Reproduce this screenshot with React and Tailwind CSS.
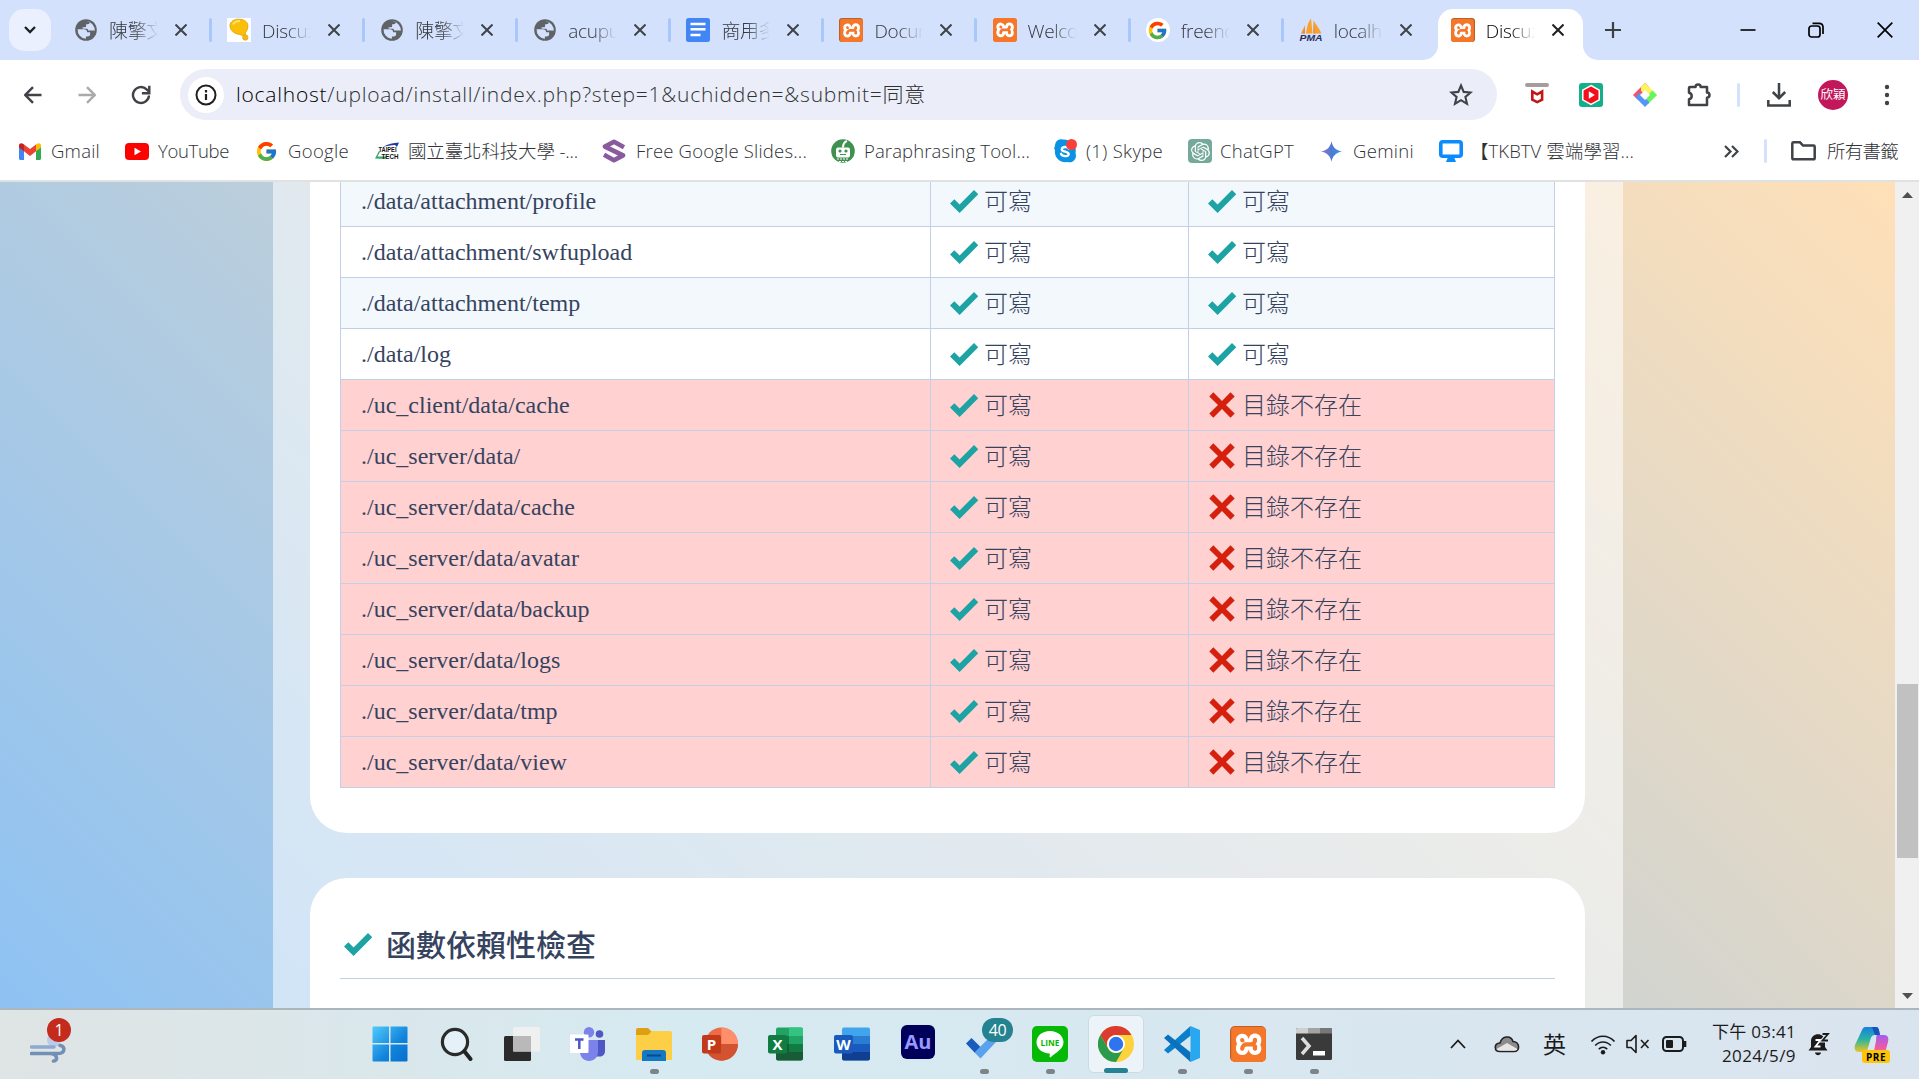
import React, { useLayoutEffect, useRef } from "react";
import { FcGoogle } from "react-icons/fc";
import { SiXampp, SiOpenai } from "react-icons/si";

const UI = "font-['Open_Sans','Noto_Sans_CJK_TC',sans-serif]";

/* Text set to a fixed measure by adjusting its tracking. */
function Fit({ w, children, className = "" }) {
  const ref = useRef(null);
  useLayoutEffect(() => {
    const el = ref.current;
    el.style.letterSpacing = "0px";
    const n = Array.from(el.textContent).length;
    el.style.letterSpacing = (w - el.getBoundingClientRect().width) / n + "px";
  }, [w]);
  return (
    <span ref={ref} className={"inline-block shrink-0 whitespace-pre " + className}>
      {children}
    </span>
  );
}

/* ---------- favicons ---------- */
const Globe = () => (
  <svg viewBox="0 0 24 24" className="size-6">
    <circle cx="12" cy="12" r="10.8" fill="#5f6368" />
    <path d="M3.6 11.2h6.2c2.2 0 3.3 1.2 3.3 3h3v2.4c0 1.2-1 1.9-2.6 1.9h-1.6v2.3A9 9 0 0 1 3.6 11.2z" fill="#d3e1fc" />
    <path d="M12.6 3.3c1.3.1 2.3.3 3.2.8-.1 1.6-.9 2.1-2.2 2.1h-1.500v1.700c0 .9-.5 1.300-1.400 1.300h-1c-1 0-1.300 0-1.300.6 0 .5.5.9 1.300.9h2.600c1.300 0 1.800.6 1.800 1.900h4.500c.5 0 1.200-.1 2.100.3a9 9 0 0 0-8.100-9.600z" fill="#d3e1fc" />
  </svg>
);
const Bulb = () => (
  <svg viewBox="0 0 24 24" className="size-6">
    <rect width="24" height="24" fill="#fff" />
    <path d="M3 7.500C3 4 7 1.200 11.500 1.200c4.700 0 8.500 2 9.200 5.300.7 4-1.200 6.500-2.200 7.800l-.5 3c-2 .3-3 .2-5.200-.9C7 16 3 12 3 7.500z" fill="#fbbf0a" stroke="#e5a80d" />
    <path d="M6 6.500C7.500 3.500 10 3 13 3" stroke="#ffe46b" strokeWidth="2" fill="none" />
    <circle cx="18.300" cy="19.500" r="2.700" fill="#f5b80d" stroke="#e0a010" strokeWidth=".7" />
  </svg>
);
const Docs = () => (
  <svg viewBox="0 0 24 24" className="size-6">
    <rect width="24" height="24" rx="2.500" fill="#4285f4" />
    <path d="M4.500 6h15M4.500 11.300h15M4.500 17h10" stroke="#fff" strokeWidth="2.400" />
  </svg>
);
const Xampp = ({ big, glossy = true }) => (
  <span
    className={
      (big ? "size-9 rounded-[5px] " : "size-6 rounded-[3px] ") +
      (glossy ? "bg-[#b9602a] " : "bg-[#fb7a24] ") +
      "flex shrink-0 items-center justify-center overflow-hidden"
    }
  >
    <span className={"flex shrink-0 items-center justify-center bg-white " + (big ? "size-7" : "size-[19px]")}>
      <SiXampp className={"shrink-0 text-[#f5772a] " + (big ? "size-[35px]" : glossy ? "size-[23px]" : "size-6")} />
    </span>
  </span>
);
const GoogleTab = () => (
  <span className="flex size-6 items-center justify-center rounded-full bg-white">
    <FcGoogle className="size-[21px]" />
  </span>
);
const Pma = () => (
  <svg viewBox="0 0 24 24" className="size-6">
    <path d="M2 15.500 6 7v8.500zM7 15.500C8 10 8.500 5 12 .5l1.500 15zM14.500 15.500V2.500C17 6 20.500 11 22.500 15.500z" fill="#f8a12c" />
    <path d="M3 15.500 6 9v6.500zM14.500 5l2 10.500h-2z" fill="#e98a3a" />
    <text x="12" y="23.300" textAnchor="middle" textLength="23" lengthAdjust="spacingAndGlyphs" fontFamily="Liberation Sans" fontStyle="italic" fontWeight="bold" fontSize="9" fill="#2b2f63">PMA</text>
  </svg>
);

const X = ({ dark }) => (
  <svg viewBox="0 0 12 12" className={"size-3 " + (dark ? "text-[#1f1f1f]" : "text-[#3f4246]")}>
    <path d="M.5.5l11 11M11.500.5l-11 11" stroke="currentColor" strokeWidth="2" />
  </svg>
);

const TABS = [
  [Globe, "陳擎文"],
  [Bulb, "Discuz"],
  [Globe, "陳擎文"],
  [Globe, "acupun"],
  [Docs, "商用多"],
  [Xampp, "Docum"],
  [() => <Xampp glossy={false} />, "Welco"],
  [GoogleTab, "freeno"],
  [Pma, "localho"],
];

function TabBody({ Icon, label, active }) {
  return (
    <>
      <Icon />
      <span
        className={
          UI +
          " ml-[11px] w-[49px] overflow-hidden whitespace-nowrap pt-[2px] text-[19px] leading-7 font-light tracking-[-0.3px] mask-r-from-50% mask-r-to-100% " +
          (active ? "text-black" : "text-[#34373b]")
        }
      >
        {label}
      </span>
      <span className="ml-[17px]">
        <X dark={active} />
      </span>
    </>
  );
}

function TabStrip() {
  return (
    <div className="flex h-[60px] items-center bg-[#d3e1fc]">
      <div className="ml-[9px] flex size-[42px] items-center justify-center rounded-[15px] bg-[#eaf0fe]">
        <svg viewBox="0 0 12 8" className="h-2 w-3"><path d="M1 1l5 5 5-5" fill="none" stroke="#1f1f1f" strokeWidth="2.300" /></svg>
      </div>
      <div className="ml-[22px] flex">
        {TABS.map(([Icon, label], i) => (
          <div key={i} className="flex h-6 w-[153.100px] items-center pl-px">
            <TabBody Icon={Icon} label={label} />
            <span className={"ml-[22px] h-6 w-[3px] rounded-sm " + (i === 8 ? "" : "bg-[#a8c7fa]")} />
          </div>
        ))}
      </div>
      <div className="relative -ml-[13px] flex h-[51px] w-[145px] items-center self-end rounded-t-[15px] bg-white pb-[9px] pl-[13px]">
        <TabBody Icon={Xampp} label="Discuz" active />
        <svg viewBox="0 0 15 15" className="absolute bottom-0 -left-[15px] size-[15px]"><path d="M15 0v15H0A15 15 0 0 0 15 0z" fill="#fff" /></svg>
        <svg viewBox="0 0 15 15" className="absolute -right-[15px] bottom-0 size-[15px]"><path d="M0 0v15h15A15 15 0 0 1 0 0z" fill="#fff" /></svg>
      </div>
      <svg viewBox="0 0 16 16" className="ml-[22px] size-4"><path d="M8 0v16M0 8h16" stroke="#3c4043" strokeWidth="2.200" /></svg>
      <div className="mr-[26px] ml-auto flex items-center">
        <svg viewBox="0 0 16 16" className="size-4"><path d="M.5 8h15" stroke="#000" strokeWidth="1.600" /></svg>
        <svg viewBox="0 0 16 16" className="ml-[52px] size-4">
          <rect x="1" y="4" width="11" height="11" rx="2.500" fill="none" stroke="#000" strokeWidth="1.700" />
          <path d="M4.500 1.300H11c2.500 0 4 1.500 4 4V12" fill="none" stroke="#000" strokeWidth="1.700" />
        </svg>
        <svg viewBox="0 0 16 16" className="ml-[53px] size-4"><path d="M.7.7l14.600 14.600M15.300.7.7 15.300" stroke="#000" strokeWidth="1.700" /></svg>
      </div>
    </div>
  );
}

function Toolbar() {
  return (
    <div className="flex h-[60px] items-center pt-[9px]">
      <svg viewBox="0 0 18 18" className="ml-6 size-[18px]"><path d="M17.500 9H1.500M9 1.200 1.300 9 9 16.800" fill="none" stroke="#3f4246" strokeWidth="2.400" /></svg>
      <svg viewBox="0 0 18 18" className="ml-9 size-[18px]"><path d="M.5 9h16M9 1.200 16.700 9 9 16.800" fill="none" stroke="#a9aaac" strokeWidth="2.400" /></svg>
      <svg viewBox="0 0 20 20" className="ml-[35px] size-5">
        <path d="M18 10.500a8 8 0 1 1-2.400-6.200l2.200 2.200" fill="none" stroke="#3f4246" strokeWidth="2.400" />
        <path d="M18.300.8v7.400h-7.400" fill="none" stroke="#3f4246" strokeWidth="2.400" />
      </svg>
      <div className="ml-[29px] flex h-[51px] w-[1317px] items-center rounded-full bg-[#ebeef8] pl-2">
        <div className="flex size-9 items-center justify-center rounded-full bg-white">
          <svg viewBox="0 0 22 22" className="size-[22px]">
            <circle cx="11" cy="11" r="9.500" fill="none" stroke="#1f1f1f" strokeWidth="2" />
            <path d="M11 10v6M11 6v2.400" stroke="#1f1f1f" strokeWidth="2.200" />
          </svg>
        </div>
        <Fit w={690} className={UI + " mb-[2px] ml-[12px] text-[21px] leading-7 font-light text-[#303236]"}>
          <span className="text-black">localhost</span>/upload/install/index.php?step=1&amp;uchidden=&amp;submit=同意
        </Fit>
        <svg viewBox="0 0 24 24" className="mr-6 ml-auto size-6">
          <path d="M12 2.500l2.700 6.400 6.900.6-5.200 4.500 1.600 6.800-6-3.600-6 3.600 1.600-6.800-5.200-4.500 6.900-.6z" fill="none" stroke="#3f4246" strokeWidth="2.100" />
        </svg>
      </div>
      <svg viewBox="0 0 24 24" className="ml-7 size-6">
        <rect y="0" width="24" height="4" rx="2" fill="#a39d9b" />
        <path d="M7.300 8.500v8.200l4.900 2.400 4.900-2.400V8.500l-4.900 2.800z" fill="none" stroke="#c01818" strokeWidth="2.600" />
      </svg>
      <svg viewBox="0 0 24 24" className="ml-[30px] size-6">
        <rect width="24" height="24" rx="3" fill="#12b08a" />
        <path d="M12 2.500l8.200 4.700v9.600L12 21.500l-8.200-4.700V7.200z" fill="#f40f1d" stroke="#fff" strokeWidth="1.500" />
        <path d="M9.800 8.300l6 3.700-6 3.700z" fill="#fff" />
      </svg>
      <svg viewBox="0 0 24 24" className="ml-[30px] size-6">
        <path d="M0 12L12 0l4.500 4.500L4.500 16.500z" fill="#f84f6f" />
        <path d="M8 4L12 0l12 12-4.500 4.500L8 8z" fill="#fdf35a" />
        <path d="M24 12l-9 9-4.500-4.500 9-9z" fill="#68f45e" />
        <path d="M2.500 14.500L12 24l4.500-4.500L6.500 9.500z" fill="#5694fa" />
        <path d="M12 7l5 5-5 5-5-5z" fill="#fff" />
      </svg>
      <svg viewBox="0 0 26 26" className="ml-[29px] size-[26px]">
        <path d="M4 5h5.500a2.600 2.600 0 0 1 5.200 0H21v5.500c3.300 0 3.300 5.200 0 5.200V23H3v-5.700c3.600-.7 3.600-5.800 0-6.500V6a1 1 0 0 1 1-1z" fill="none" stroke="#3f4246" strokeWidth="2.500" strokeLinejoin="round" />
      </svg>
      <span className="ml-[25px] h-6 w-[3px] rounded bg-[#d3e1fc]" />
      <svg viewBox="0 0 24 24" className="ml-[27px] size-6">
        <path d="M12 0v15M5.800 9l6.200 6.200L18.200 9" fill="none" stroke="#3f4246" strokeWidth="2.500" />
        <path d="M1.300 17v5.500h21.400V17" fill="none" stroke="#3f4246" strokeWidth="2.500" />
      </svg>
      <span className="ml-[27px] flex size-[30px] items-center justify-center rounded-full bg-[#c2185b] font-['Noto_Sans_CJK_TC',sans-serif] text-[12.500px] text-white">欣穎</span>
      <svg viewBox="0 0 6 22" className="ml-9 h-[22px] w-1.500">
        <circle cx="3" cy="3" r="2.200" fill="#3f4246" /><circle cx="3" cy="11" r="2.200" fill="#3f4246" /><circle cx="3" cy="19" r="2.200" fill="#3f4246" />
      </svg>
    </div>
  );
}

/* ---------- bookmarks ---------- */
const Gmail = () => (
  <svg viewBox="0 0 22 17" className="-ml-px h-[17px] w-[22px]">
    <path d="M0 3v12.500C0 16.300.700 17 1.500 17H5V6z" fill="#4285f4" />
    <path d="M22 3v12.500c0 .8-.7 1.500-1.500 1.500H17V6z" fill="#34a853" />
    <path d="M0 2.500C0 .3 2.500-.5 4 .8L5 1.500V8.300L0 4.500z" fill="#c5221f" />
    <path d="M22 2.500C22 .3 19.500-.5 18 .8l-1 .7v6.800l5-3.800z" fill="#fbbc04" />
    <path d="M5 1.500l6 4.600 6-4.600v6.800L11 13 5 8.300z" fill="#ea4335" />
  </svg>
);
const YouTube = () => (
  <svg viewBox="0 0 24 17" className="h-[17px] w-6"><rect width="24" height="17" rx="4" fill="#f00" /><path d="M9.500 4.800l6.500 3.700-6.500 3.700z" fill="#fff" /></svg>
);
const Taipei = () => (
  <svg viewBox="0 0 24 18" className="h-[18px] w-6">
    <path d="M8 5C13 2 18 1 24 .5L22 5l-2-2C16 3 12 4 8 5z" fill="#2438a8" />
    <path d="M0 16.500L4 9l1 1-2.500 4.500H12L10 17z" fill="#35a870" />
    <text x="3.500" y="10" textLength="18" lengthAdjust="spacingAndGlyphs" fontFamily="Liberation Sans" fontWeight="bold" fontSize="7.500" fill="#111">TAIPEI</text>
    <text x="6.500" y="17" textLength="17" lengthAdjust="spacingAndGlyphs" fontFamily="Liberation Sans" fontWeight="bold" fontSize="8" fill="#111">TECH</text>
  </svg>
);
const Slides = () => (
  <svg viewBox="0 0 24 24" className="size-6">
    <path d="M22 8.300L12 2.800 3 7.600l18 8.800-9 4.800L2 15.700" fill="none" stroke="#8a5a9f" strokeWidth="4.600" strokeLinejoin="round" />
  </svg>
);
const Quill = () => (
  <svg viewBox="0 0 24 24" className="size-6">
    <circle cx="12" cy="12" r="11.800" fill="#3f9150" />
    <rect x="5" y="8.500" width="14" height="10" rx="2" fill="#fff" />
    <circle cx="9" cy="12" r="1.600" fill="#3f9150" /><circle cx="15" cy="12" r="1.600" fill="#3f9150" />
    <path d="M9 15.500h6" stroke="#3f9150" /><path d="M12 8.500C12 5 13 3 16 2" stroke="#fff" strokeWidth="2" fill="none" />
    <path d="M6 20h12M8 22.500h8" stroke="#fff" strokeDasharray="2 1" />
  </svg>
);
const Skype = () => (
  <svg viewBox="0 0 24 24" className="size-6">
    <path d="M2 7C2 3 5-.5 9.500.5 19 0 24 7 22.500 14c2 6-3 10.500-8 9C7 24 1 19 2 11 .5 10 1.500 8 2 7z" fill="#0a92e4" />
    <path d="M16 9.500c-1-2-7-2.300-7.200.8-.2 3 7 1.700 6.900 4.800-.1 3-7 2.500-7.700-.3" fill="none" stroke="#fff" strokeWidth="2.400" strokeLinecap="round" />
    <circle cx="18.500" cy="5.500" r="5.500" fill="#f8403a" />
  </svg>
);
const ChatGpt = () => (
  <span className="flex size-6 items-center justify-center rounded-[4px] bg-[#75a99b]"><SiOpenai className="size-[19px] text-white" /></span>
);
const Gemini = () => (
  <svg viewBox="0 0 21 21" className="-ml-px size-[21px]">
    <defs><linearGradient id="gem" x1="0" x2="1"><stop offset="0" stopColor="#8a78cf" /><stop offset=".5" stopColor="#5079d2" /><stop offset="1" stopColor="#2f9be0" /></linearGradient></defs>
    <path d="M10.500 0c1 6 4.500 9.500 10.500 10.500-6 1-9.500 4.500-10.500 10.500C9.500 15 6 11.500 0 10.500 6 9.500 9.500 6 10.500 0z" fill="url(#gem)" />
  </svg>
);
const Tkb = () => (
  <svg viewBox="0 0 24 22" className="h-[22px] w-6">
    <rect x="1.800" y="1.800" width="20.400" height="14.400" rx="2" fill="#fff" stroke="#0a8cff" strokeWidth="3.600" />
    <path d="M9 17h6l2 5H7z" fill="#0a8cff" />
  </svg>
);
const Google = () => <FcGoogle className="-ml-[2px] size-[23px]" />;

const MARKS = [
  [Gmail, "Gmail", "w-[105px]", "w-[31px]", 49],
  [YouTube, "YouTube", "w-[132px]", "w-[33px]", 71],
  [Google, "Google", "w-[118px]", "w-[31px]", 61],
  [Taipei, "國立臺北科技大學 -...", "w-[227px]", "w-[33px]", 170],
  [Slides, "Free Google Slides...", "w-[229px]", "w-[34px]", 171],
  [Quill, "Paraphrasing Tool...", "w-[222px]", "w-[33px]", 166],
  [Skype, "(1) Skype", "w-[135px]", "w-[33px]", 77],
  [ChatGpt, "ChatGPT", "w-[134px]", "w-[32px]", 74],
  [Gemini, "Gemini", "w-[117px]", "w-[31px]", 61],
  [Tkb, "【TKBTV 雲端學習...", "w-[200px]", "w-[31px]", 164],
];

function Bookmarks() {
  return (
    <div className={UI + " flex h-[60px] items-center border-b-2 border-[#e0e2e2] pl-5 text-[18.500px] font-light text-[#303236]"}>
      {MARKS.map(([Icon, label, w, iw, tw]) => (
        <div key={label} className={"flex shrink-0 items-center " + w}>
          <span className={"flex shrink-0 items-center " + iw}><Icon /></span>
          <Fit w={tw} className="leading-7">{label}</Fit>
        </div>
      ))}
      <svg viewBox="0 0 15 13" className="ml-auto h-[13px] w-[15px]"><path d="M1 1l5.500 5.500L1 12M8 1l5.500 5.500L8 12" fill="none" stroke="#3f4246" strokeWidth="2.200" /></svg>
      <span className="ml-[25px] h-6 w-[3px] rounded bg-[#d3e1fc]" />
      <svg viewBox="0 0 25 20" className="ml-6 h-5 w-[25px]"><path d="M1.300 17V2.500c0-.7.500-1.200 1.200-1.200h6.500L12 4.500h10.500c.7 0 1.200.5 1.200 1.200V17c0 .8-.5 1.300-1.200 1.300H2.500c-.7 0-1.200-.5-1.200-1.300z" fill="none" stroke="#3f4246" strokeWidth="2.500" /></svg>
      <Fit w={71} className="mr-[21px] ml-[11px] leading-7">所有書籤</Fit>
    </div>
  );
}

/* ---------- page ---------- */
const Check = () => (
  <svg viewBox="0 0 28 23" className="h-[23px] w-7 shrink-0"><path d="M0 13.500l4.300-4.300 5.300 5.200L24 0l4.200 4.300L9.600 23z" fill="#1ea3a5" /></svg>
);
const Cross = () => (
  <svg viewBox="0 0 26 26" className="mr-px ml-px size-[26px] shrink-0"><path d="M4.300.3L13 9l8.500-8.700 4.200 4.200L17 13l8.700 8.500-4.200 4.200L13 17l-8.700 8.700L.3 21.500 9 13 .3 4.500z" fill="#d6200e" /></svg>
);

const DIRS = [
  ["./data/attachment/profile", true],
  ["./data/attachment/swfupload", true],
  ["./data/attachment/temp", true],
  ["./data/log", true],
  ["./uc_client/data/cache", false],
  ["./uc_server/data/", false],
  ["./uc_server/data/cache", false],
  ["./uc_server/data/avatar", false],
  ["./uc_server/data/backup", false],
  ["./uc_server/data/logs", false],
  ["./uc_server/data/tmp", false],
  ["./uc_server/data/view", false],
];

const CJK = "font-['Noto_Sans_CJK_TC',sans-serif] font-light";

function Status({ ok }) {
  return (
    <div className="flex items-center">
      {ok ? <Check /> : <Cross />}
      <span className={CJK + " ml-[6px] pb-[2px] leading-none"}>{ok ? "可寫" : "目錄不存在"}</span>
    </div>
  );
}

function Page() {
  return (
    <div className="flex h-[826px]">
      <div className="flex w-[1895px] justify-start overflow-hidden bg-[linear-gradient(45deg,#8ec2f3,#ffe0b8)] pl-[273px]">
        <div className="h-[826px] w-[1350px] overflow-hidden bg-white/55 pr-[38px] pl-[37px]">
          <div className="flow-root h-[651px] rounded-b-[37px] bg-white px-[30px]">
            <div className="-mt-[6px] w-[1215px] border-l border-[#c3cfe6] font-['Liberation_Serif','Noto_Sans_CJK_TC',serif] text-2xl leading-none text-[#36435f]">
              {DIRS.map(([dir, ok], i) => (
                <div
                  key={dir}
                  className={
                    "grid h-[51px] grid-cols-[590px_258px_366px] border-b border-[#c3cfe6] *:border-r *:border-[#c3cfe6] " +
                    (ok ? (i % 2 ? "bg-white" : "bg-[#f2f8fc]") : "bg-[#ffd1d1]")
                  }
                >
                  <div className="flex items-center pl-5">{dir}</div>
                  <div className="flex pl-[19px]"><Status ok /></div>
                  <div className="flex pl-[19px]"><Status ok={ok} /></div>
                </div>
              ))}
            </div>
          </div>
          <div className="mt-[45px] h-[200px] rounded-t-[37px] bg-white px-[30px] pt-8">
            <h2 className="flex h-[69px] items-center border-b border-[#c3cfe6] pl-1">
              <Check />
              <span className="ml-[14px] pb-[3px] font-['Noto_Sans_CJK_TC',sans-serif] text-[30px] leading-none font-medium text-[#36435f]">函數依賴性檢查</span>
            </h2>
          </div>
        </div>
      </div>
      <div className="flex w-6 flex-col items-center bg-[#f0f0f0]">
        <svg viewBox="0 0 11 6" className="mt-[10px] h-1.500 w-[11px]"><path d="M0 6L5.500 0 11 6z" fill="#505050" /></svg>
        <span className="mt-[486px] h-[174px] w-[21px] bg-[#c1c1c1]" />
        <svg viewBox="0 0 11 6" className="mt-auto mb-[9px] h-1.500 w-[11px]"><path d="M0 0l5.500 6L11 0z" fill="#505050" /></svg>
      </div>
    </div>
  );
}

/* ---------- taskbar ---------- */
const Windows = () => (
  <svg viewBox="0 0 36 36" className="size-9">
    <defs><linearGradient id="win" x1="0" y1="0" x2="1" y2="1"><stop offset="0" stopColor="#4fcbfb" /><stop offset=".6" stopColor="#1183dc" /><stop offset="1" stopColor="#0670cb" /></linearGradient></defs>
    <path d="M1.500.5H17v16.500H.5V1.500a1 1 0 0 1 1-1zM18.500.5h16a1 1 0 0 1 1 1V17h-17zM.5 18.500H17v17H1.500a1 1 0 0 1-1-1zM18.500 18.500h17v16a1 1 0 0 1-1 1h-16z" fill="url(#win)" />
  </svg>
);
const Search = () => (
  <svg viewBox="0 0 34 36" className="h-9 w-[34px]"><circle cx="16" cy="16" r="12.600" fill="#e4f1f8" stroke="#2b2b2b" strokeWidth="3.200" /><path d="M25.500 25.500l6 7.500" stroke="#222" strokeWidth="4" strokeLinecap="round" /></svg>
);
const TaskView = () => (
  <svg viewBox="0 0 36 36" className="size-9"><rect x="0" y="10" width="27" height="25" rx="1.500" fill="#2b2b2b" /><rect x="9" y="1" width="27" height="24.500" rx="1.500" fill="#f0f0f0" /><rect x="9" y="10" width="18" height="15.500" fill="#b9b9b9" /></svg>
);
const Teams = () => (
  <svg viewBox="0 0 36 36" className="size-9">
    <circle cx="29.500" cy="8" r="3.800" fill="#4f57c4" /><path d="M25 14h10v11c0 3-2 5.500-5 5.500H25z" fill="#4f57c4" />
    <circle cx="19" cy="6.300" r="5.200" fill="#7b83eb" /><path d="M10 14h18v12c0 5-4 9-9 9s-9-4-9-9z" fill="#7b83eb" />
    <rect x="0" y="8.500" width="18.500" height="18.500" rx="1" fill="#fff" />
    <path d="M5 13.500h8.500M9.300 13.500V23" stroke="#4f57c4" strokeWidth="2.500" />
  </svg>
);
const Explorer = () => (
  <svg viewBox="0 0 36 36" className="size-9"><path d="M0 4a2 2 0 0 1 2-2h10l4 4h18l2 4H0z" fill="#dca012" /><path d="M0 9h12l4-4h18a2 2 0 0 1 2 2v27H0z" fill="#fccf47" /><path d="M6 35V27a3 3 0 0 1 3-3h18a3 3 0 0 1 3 3v8z" fill="#1478c4" /><path d="M11 29.500h14" stroke="#0b4a8a" strokeWidth="2" /></svg>
);
const OfficeTile = ({ color, letter }) => (
  <g><rect x="0" y="9" width="19" height="18.500" rx="2" fill={color} /><text x="9.500" y="24" textAnchor="middle" fontFamily="Open Sans" fontWeight="bold" fontSize="15" fill="#fff">{letter}</text></g>
);
const Ppt = () => (
  <svg viewBox="0 0 36 36" className="size-9"><circle cx="19.500" cy="18" r="16.500" fill="#ed6c47" /><path d="M19.500 1.500A16.500 16.500 0 0 1 36 18H19.500z" fill="#ff8f6b" /><path d="M36 18a16.500 16.500 0 0 1-31 8V18z" fill="#d35230" /><OfficeTile color="#c13b1b" letter="P" /></svg>
);
const Excel = () => (
  <svg viewBox="0 0 36 36" className="size-9"><rect x="8" y="1.500" width="27" height="33" rx="2" fill="#21a366" /><path d="M21 1.500h12a2 2 0 0 1 2 2V10H21z" fill="#33c481" /><path d="M8 10h13v8H8zM21 18h14v8H21z" fill="#107c41" /><path d="M8 18h13v8h14v6.500a2 2 0 0 1-2 2H10a2 2 0 0 1-2-2z" fill="#185c37" /><OfficeTile color="#107c41" letter="X" /></svg>
);
const Word = () => (
  <svg viewBox="0 0 36 36" className="size-9"><rect x="8" y="1.500" width="28" height="33" rx="2" fill="#41a5ee" /><path d="M8 10h28v8H8z" fill="#2b7cd3" /><path d="M8 18h28v8H8z" fill="#185abd" /><path d="M8 26h28v6.500a2 2 0 0 1-2 2H10a2 2 0 0 1-2-2z" fill="#103f91" /><OfficeTile color="#185abd" letter="W" /></svg>
);
const Audition = () => (
  <span className="mb-1 flex size-[34px] items-center justify-center rounded-md bg-[#00005b] font-['Open_Sans',sans-serif] text-[20px] leading-none font-bold text-[#9999ff]">Au</span>
);
const Todo = () => (
  <span className="relative flex size-9 items-center">
    <svg viewBox="0 0 36 36" className="size-9"><path d="M0 17.500l5.500-5.500 9 9L9 27z" fill="#195abd" /><path d="M8.500 26.500L25 10l5 6-15.500 16.500z" fill="#5aa2ee" /></svg>
    <span className="absolute -top-[8px] left-[16px] flex h-6 w-[31px] items-center justify-center rounded-full bg-[#248291] font-['Open_Sans',sans-serif] text-[16px] tracking-tight text-white">40</span>
  </span>
);
const Line = () => (
  <svg viewBox="0 0 36 36" className="size-9"><rect width="36" height="36" rx="5" fill="#06b906" /><path d="M18 5c8 0 13.500 5 13.500 11.300C31.500 23 23 27.500 19 31c-1 .8-1.500.3-1.400-.7l.2-2.800C10 27.500 4.500 22.500 4.500 16.300 4.500 10 10 5 18 5z" fill="#fff" /><text x="18" y="19.800" textAnchor="middle" textLength="19" lengthAdjust="spacingAndGlyphs" fontFamily="Open Sans" fontWeight="bold" fontSize="8.500" fill="#06b906">LINE</text></svg>
);
const Chrome = () => (
  <svg viewBox="0 0 36 36" className="size-9">
    <circle cx="18" cy="18" r="18" fill="#fdd23c" />
    <path d="M2.400 9A18 18 0 0 1 33.600 9L18 9a9 9 0 0 0-7.800 13.500z" fill="#dc3b30" />
    <path d="M2.400 9a18 18 0 0 0 15.600 27l7.800-13.500a9 9 0 0 1-15.600 0z" fill="#2a9a4c" />
    <circle cx="18" cy="18" r="9" fill="#fff" /><circle cx="18" cy="18" r="7.200" fill="#2f74ee" />
  </svg>
);
const VsCode = () => (
  <svg viewBox="0 0 36 36" className="size-9">
    <path d="M26.500 0L36 4v28l-9.500 4z" fill="#27a8f0" />
    <path d="M26.500 0v9.800L4 27.500 0 24z" fill="#0a7fcb" /><path d="M26.500 36v-9.800L4 8.500 0 12z" fill="#0a72bd" />
  </svg>
);
const Terminal = () => (
  <svg viewBox="0 0 36 32" className="h-8 w-9"><rect width="36" height="32" rx="1.500" fill="#3a3a3a" /><path d="M0 5.500V1.500A1.500 1.500 0 0 1 1.500 0H12v5.500z" fill="#cfcfcf" /><path d="M12 0h12v5.500H12z" fill="#a3a3a3" /><path d="M24 0h10.500A1.500 1.500 0 0 1 36 1.500V5.500H24z" fill="#777" /><path d="M6 10l7 8-7 8" fill="none" stroke="#ddd" strokeWidth="3.500" /><rect x="17" y="23" width="12" height="4.500" fill="#fff" /></svg>
);

const APPS = [
  [Windows], [Search], [TaskView], [Teams], [Explorer, "dot"], [Ppt], [Excel], [Word], [Audition],
  [Todo, "dot"], [Line, "dot"], [Chrome, "active"], [VsCode, "dot"], [() => <Xampp big />, "dot"], [Terminal, "dot"],
];

function Taskbar() {
  return (
    <div className="flex h-[71px] border-t-2 border-[#abb7bc] bg-linear-to-r from-[#dfe4e4] via-[#d6eaf1] via-35% to-[#dae4ef]">
      <div className="flex w-[355px] shrink-0 pt-[9px] pl-[30px]">
        <div className="relative h-12 w-[42px]">
          <svg viewBox="0 0 36 30" className="mt-[16px] h-[30px] w-9">
            <circle cx="24" cy="5" r="7" fill="#b9cbe6" />
            <path d="M1.500 12H24" stroke="#8fa9d2" strokeWidth="3.400" strokeLinecap="round" />
            <path d="M1.500 18.500H28c8 0 7-8 2-8M20 18.500c8 0 8 8 3.500 7.500" fill="none" stroke="#7290b4" strokeWidth="3.600" strokeLinecap="round" />
          </svg>
          <span className="absolute -top-px left-[17px] flex size-6 items-center justify-center rounded-full bg-[#c42b1c] font-['Open_Sans',sans-serif] text-[16px] text-white">1</span>
        </div>
      </div>
      <div className="flex shrink-0 pl-[2px]">
        {APPS.map(([Icon, state], i) => (
          <div key={i} className="flex w-[66px] shrink-0 justify-center pt-[5px]">
            <div
              className={
                "relative flex h-[58px] w-14 items-center justify-center rounded-md " +
                (state === "active" ? "border border-[#cbdbe4] bg-[#ecf4fa]" : "")
              }
            >
              <Icon />
              {state === "dot" && <span className="absolute -bottom-px h-[5px] w-[9px] rounded-full bg-[#7c8488]" />}
              {state === "active" && <span className="absolute -bottom-px h-[5px] w-6 rounded-full bg-[#248291]" />}
            </div>
          </div>
        ))}
      </div>
      <div className="ml-auto flex h-[68px] items-center text-[#1b1b1b]">
        <svg viewBox="0 0 16 10" className="h-[10px] w-4"><path d="M1 9l7-7.500L15 9" fill="none" stroke="currentColor" strokeWidth="1.800" /></svg>
        <svg viewBox="0 0 26 18" className="ml-7 h-[18px] w-[26px]">
          <path d="M6 16.500c-6 0-6.500-8 0-8.500C8 .5 17 0 19 6.500c7 0 7.500 10 1 10z" fill="#8c8c8c" stroke="#222" strokeWidth="1.600" />
          <path d="M2.500 14L13 8l10.500 6c-.5 1-1.500 1.700-3 1.700H6c-2 0-3-.7-3.500-1.700z" fill="#e6e6e6" />
        </svg>
        <span className="ml-[23px] pb-[2px] font-['Noto_Sans_CJK_TC',sans-serif] text-[23px] leading-none">英</span>
        <svg viewBox="0 0 26 21" className="ml-[24px] h-[21px] w-[26px]">
          <path d="M1.500 7.500c6.500-7 16.500-7 23 0M5.200 11.500c4.400-4.700 11.200-4.700 15.600 0M8.800 15.200c2.400-2.600 6-2.600 8.400 0" fill="none" stroke="currentColor" strokeWidth="1.700" /><circle cx="13" cy="18.300" r="2.200" fill="currentColor" />
        </svg>
        <svg viewBox="0 0 24 20" className="ml-[10px] h-5 w-6"><path d="M1 6.500h4L10 1.500v17L5 13.500H1z" fill="none" stroke="currentColor" strokeWidth="1.600" strokeLinejoin="round" /><path d="M15 6l7.500 8M22.500 6L15 14" stroke="currentColor" strokeWidth="1.600" /></svg>
        <svg viewBox="0 0 25 16" className="ml-[12px] h-4 w-[25px]"><rect x="1" y="1" width="20" height="14" rx="3.500" fill="none" stroke="currentColor" strokeWidth="2" /><rect x="4" y="4" width="7" height="8" rx="1" fill="currentColor" /><path d="M23 5v6" stroke="currentColor" strokeWidth="2.600" /></svg>
        <div className={UI + " ml-[24px] flex w-[85px] flex-col items-end text-[17px] leading-6"}>
          <Fit w={84}>下午 03:41</Fit>
          <Fit w={74}>2024/5/9</Fit>
        </div>
        <svg viewBox="0 0 22 24" className="ml-[12px] h-6 w-[22px]">
          <path d="M3 9C3 0 17 0 17 9v6l2.500 3.500h-19L3 15z" fill="currentColor" /><path d="M7 20.500h6c-.5 3.500-5.500 3.500-6 0z" fill="currentColor" />
          <path d="M7.500 8h5l-5 6.500h5" fill="none" stroke="#fff" strokeWidth="1.800" /><path d="M14.500 2h5.500l-5.500 6.500H20" fill="none" stroke="#dbe8f0" strokeWidth="4" /><path d="M14.500 2h5.500l-5.500 6.500H20" fill="none" stroke="currentColor" strokeWidth="1.800" />
        </svg>
        <span className="relative mr-[29px] ml-[24px] block size-9">
          <svg viewBox="0 0 36 36" className="size-9">
            <defs>
              <linearGradient id="cpa" x1="0" y1="0" x2="0" y2="1"><stop offset="0" stopColor="#1a7fe0" /><stop offset=".5" stopColor="#28b5a0" /><stop offset="1" stopColor="#f0c420" /></linearGradient>
              <linearGradient id="cpb" x1="0" y1="0" x2="0" y2="1"><stop offset="0" stopColor="#a55cf0" /><stop offset=".6" stopColor="#ef5aa0" /><stop offset="1" stopColor="#f88a50" /></linearGradient>
            </defs>
            <path d="M8 4C9 1.500 10 1 13 1h8c4 0 4 3 5 8h-5c-3 0-4 2-5 6l-2 7c-1 3-2 4-5 4H5c-4 0-5-3-4-7z" fill="url(#cpa)" />
            <path d="M18 1h4c3 0 3 3 4 8h-5z" fill="#1452c0" />
            <path d="M23 9h7c4 0 5 3 4 7l-3 11c-1 3-3 4-6 4h-9c3 0 3-3 4-6l2-10c.5-4 0-5 1-6z" fill="url(#cpb)" />
          </svg>
          <span className="absolute top-[24px] left-[8px] flex h-[13px] w-[28px] items-center justify-center rounded-[3px] bg-[#fdc508] font-['Open_Sans',sans-serif] text-[10px] leading-none font-bold tracking-[0.500px] text-black">PRE</span>
        </span>
      </div>
    </div>
  );
}

export default function App() {
  return (
    <div className="flex h-[1079px] w-[1919px] flex-col overflow-hidden bg-white">
      <TabStrip />
      <div className="flex h-[122px] flex-col">
        <Toolbar />
        <div className="mt-[2px]"><Bookmarks /></div>
      </div>
      <Page />
      <Taskbar />
    </div>
  );
}
